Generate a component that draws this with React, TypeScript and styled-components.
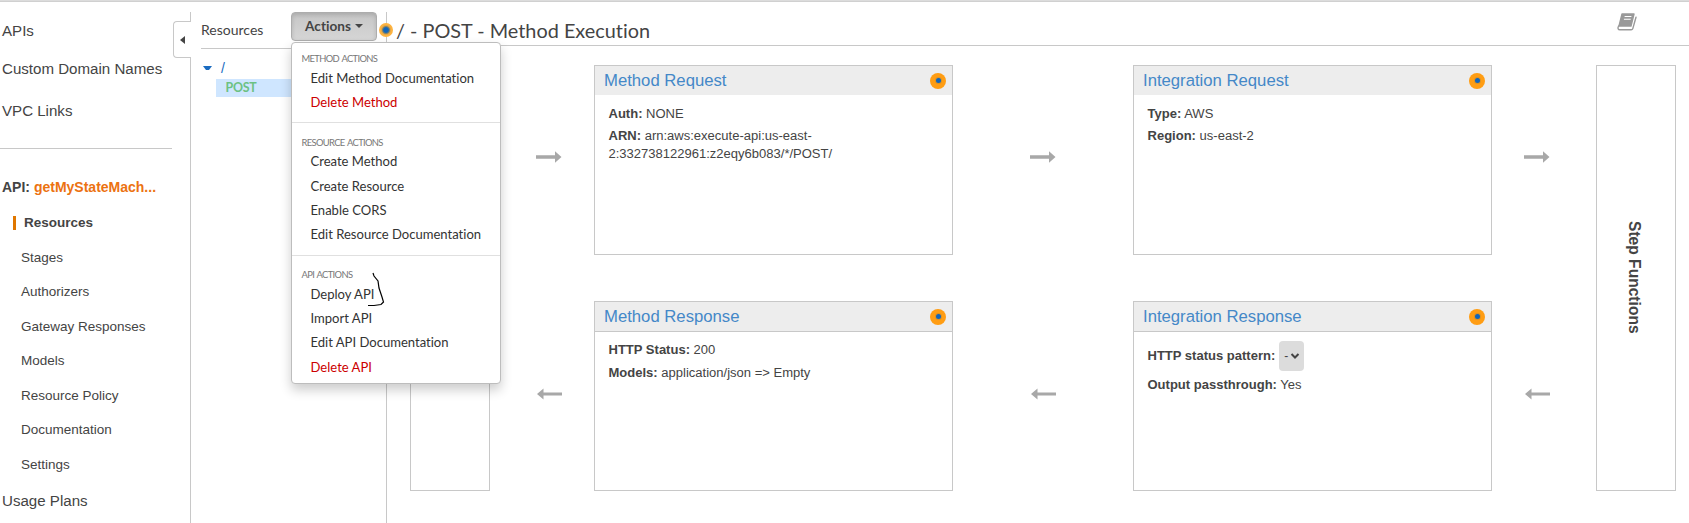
import React from 'react';
import styled, { createGlobalStyle, css } from 'styled-components';

const SANS = '"Liberation Sans", Arial, sans-serif';
const LATO = 'Lato, "Liberation Sans", sans-serif';
const LINE = '#c8c8c8';

const GlobalStyle = createGlobalStyle`
  *, *::before, *::after { box-sizing: border-box; }
  body { margin: 0; background: #fff; color: #444; font-family: ${SANS}; overflow: hidden; }
`;

const Page = styled.div`
  position: relative;
  display: flex;
  flex-direction: column;
  width: 1689px;
  height: 523px;
  overflow: hidden;
`;
const TopStrip = styled.div`
  flex: none;
  height: 2px;
  background: #dcdcdc;
  border-bottom: 1px solid #d0d0d0;
`;
const Columns = styled.div`
  flex: 1;
  display: flex;
  padding-top: 10px;
`;

/* Left navigation */
const Sidebar = styled.nav`
  position: relative;
  width: 191px;
  border-right: 1px solid ${LINE};
  padding-top: 8px;
`;
const CollapseTab = styled.button`
  position: absolute;
  top: 9px;
  right: -1px;
  width: 18px;
  height: 37px;
  padding: 0;
  display: flex;
  align-items: center;
  justify-content: center;
  background: #fff;
  border: 1px solid ${LINE};
  border-right: 0;
  border-radius: 4px 0 0 4px;
`;
const NavLink = styled.div<{ $gap: number }>`
  height: 22px;
  line-height: 22px;
  padding-left: 2px;
  margin-bottom: ${(p) => p.$gap}px;
  font-size: 15.1px;
`;
const NavRule = styled.div`
  width: 172px;
  height: 1px;
  background: ${LINE};
`;
const ApiName = styled.div`
  margin-top: 27px;
  height: 22px;
  padding-left: 2px;
  line-height: 22px;
  font-size: 14px;
  font-weight: 700;
  white-space: pre;
  span { color: #ec7211; }
`;
const SubNav = styled.div`
  margin: 7.3px 0 8.7px;
`;
const SubLink = styled.div<{ $active?: boolean }>`
  display: flex;
  align-items: center;
  height: 34.5px;
  padding-left: 21px;
  font-size: 13.5px;
  ${(p) =>
    p.$active &&
    css`
      padding-left: 13px;
      font-weight: 700;
      &::before {
        content: '';
        width: 3px;
        height: 14px;
        margin-right: 8px;
        background: #e07700;
      }
    `}
`;

/* Resource tree */
const ResourcePane = styled.section`
  width: 196px;
  padding-left: 10px;
  border-right: 1px solid ${LINE};
`;
const PaneHeader = styled.header`
  display: flex;
  height: 37px;
  border-bottom: 1px solid ${LINE};
`;
const PaneTitle = styled.div`
  width: 90px;
  font: 400 14px/35px ${LATO};
`;
const ActionsButton = styled.button`
  display: flex;
  align-items: center;
  justify-content: center;
  gap: 4px;
  width: 86px;
  height: 29px;
  padding: 0 0 2px;
  border: 1px solid #adadad;
  border-radius: 4px;
  background: linear-gradient(#c6c6c6, #d6d6d6);
  box-shadow: inset 0 2px 4px rgba(0, 0, 0, 0.14);
  color: #444;
  font: 700 13.6px/20px ${LATO};
  font-variant-ligatures: none;
  i {
    border: 4px solid transparent;
    border-top-color: #444;
    border-bottom: 0;
    width: 0;
    height: 0;
  }
`;
const TreeRoot = styled.div`
  display: flex;
  align-items: center;
  gap: 9px;
  height: 18px;
  margin-top: 10px;
  padding-left: 2px;
  color: #1a6bc0;
  font-size: 14px;
`;
const TreeMethod = styled.div`
  height: 18px;
  margin: 2px 0 0 15px;
  padding-left: 9.5px;
  background: #cfe6ff;
  color: #6cc183;
  font: 700 12.4px/18.6px ${LATO};
  letter-spacing: -0.25px;
`;

/* Method execution */
const Main = styled.main`
  flex: 1;
  display: flex;
  flex-direction: column;
`;
const MainHeader = styled.header`
  display: flex;
  justify-content: space-between;
  height: 34px;
  padding-left: 9px;
  padding-right: 51px;
  border-bottom: 1px solid ${LINE};
`;
const MainTitle = styled.h1`
  margin: 0;
  font: 400 19.85px/37px ${LATO};
  font-variant-ligatures: none;
`;
const BookIcon = styled.svg`
  width: 22px;
  height: 20px;
`;
const Flow = styled.div`
  display: flex;
  height: 426px;
  margin: 19px 0 0 23px;
`;
const EndBox = styled.div`
  display: flex;
  align-items: center;
  justify-content: center;
  width: 80px;
  border: 1px solid ${LINE};
  span {
    writing-mode: vertical-rl;
    font-size: 15.6px;
    font-weight: 700;
    line-height: 20px;
    padding: 0 5px 2px 0;
  }
`;
const ArrowColumn = styled.div<{ $width: number; $inset: number }>`
  display: flex;
  flex-direction: column;
  justify-content: space-between;
  width: ${(p) => p.$width}px;
  padding: 84px 0 89.5px ${(p) => p.$inset}px;
`;
const ArrowSvg = styled.svg<{ $left?: boolean }>`
  display: block;
  width: 26px;
  height: 16px;
  margin-left: ${(p) => (p.$left ? 1 : 0)}px;
`;
const CardColumn = styled.div`
  display: flex;
  flex-direction: column;
  justify-content: space-between;
  width: 359px;
`;
const Card = styled.article`
  height: 190px;
  border: 1px solid ${LINE};
`;
const CardHeader = styled.header<{ $ruled?: boolean }>`
  display: flex;
  align-items: center;
  justify-content: space-between;
  height: ${(p) => (p.$ruled ? 30 : 29)}px;
  padding: 0 6px 0 9px;
  background: #ededed;
  border-bottom: ${(p) => (p.$ruled ? `1px solid ${LINE}` : '0')};
  color: #4488c8;
  font-size: 16.7px;
`;
const CardBody = styled.div<{ $top?: number }>`
  padding: ${(p) => p.$top ?? 9}px 13px 0 13.5px;
  font-size: 13.03px;
  line-height: 18px;
`;
const Field = styled.div<{ $after?: number }>`
  margin-bottom: ${(p) => p.$after ?? 5}px;
`;
const SelectField = styled(Field)`
  display: flex;
  align-items: center;
  gap: 4px;
  height: 30px;
`;
const PatternSelect = styled.div`
  display: flex;
  align-items: center;
  justify-content: space-between;
  width: 25px;
  height: 30px;
  padding: 0 4px 0 5px;
  border-radius: 4px;
  background: #dcdcdc;
  font-size: 12px;
`;

const Dot = styled.span<{ $size: number; $soft?: boolean }>`
  flex: none;
  display: flex;
  align-items: center;
  justify-content: center;
  width: ${(p) => p.$size}px;
  height: ${(p) => p.$size}px;
  border-radius: 50%;
  background: ${(p) => (p.$soft ? '#fdb340' : '#ff9d13')};
  &::before {
    content: '';
    width: ${(p) => (p.$soft ? 8 : 5)}px;
    height: ${(p) => (p.$soft ? 8 : 5)}px;
    border-radius: 50%;
    background: #1166bb;
    border: ${(p) => (p.$soft ? '1px solid #8c8460' : '0')};
    box-shadow: 0 0 0 1px ${(p) => (p.$soft ? '#e0a64a' : '#dc9225')};
  }
`;
const TitleDot = styled(Dot)`
  position: absolute;
  left: 379px;
  top: 23px;
`;

/* Actions dropdown */
const Menu = styled.div`
  position: absolute;
  left: 291px;
  top: 42px;
  width: 210px;
  height: 342px;
  padding: 9px 0 0;
  background: #fff;
  border: 1px solid #bdbdbd;
  border-radius: 4px;
  box-shadow: 0 6px 12px rgba(0, 0, 0, 0.2);
`;
const MenuGroup = styled.div`
  & + & {
    margin-top: 7.9px;
    border-top: 1px solid #e0e0e0;
    padding-top: 12.6px;
  }
`;
const MenuHeading = styled.div`
  height: 13.7px;
  padding-left: 9.5px;
  color: #777;
  font: 400 9.4px/14.5px ${LATO};
  letter-spacing: -0.65px;
  word-spacing: 1px;
`;
const MenuItem = styled.div<{ $danger?: boolean }>`
  height: 24.3px;
  padding-left: 18.5px;
  color: ${(p) => (p.$danger ? '#cc0000' : '#333')};
  font: 400 13.06px/24.3px ${LATO};
  font-variant-ligatures: none;
`;
const PenMark = styled.svg`
  position: absolute;
  left: 366px;
  top: 272px;
  width: 20px;
  height: 36px;
`;

function Arrow({ left }: { left?: boolean }) {
  return (
    <ArrowSvg $left={left} viewBox="0 0 26 16" fill="#a8a8a8">
      {left ? (
        <path d="M0 8 6.5 2.5V6.5H25V9.5H6.5V13.5Z" />
      ) : (
        <path d="M0 6.2H19V2.2L25.5 8 19 13.8V9.8H0Z" />
      )}
    </ArrowSvg>
  );
}

const Arrows = ({ width, inset }: { width: number; inset: number }) => (
  <ArrowColumn $width={width} $inset={inset}>
    <Arrow />
    <Arrow left />
  </ArrowColumn>
);

const menu = [
  { heading: 'METHOD ACTIONS', items: ['Edit Method Documentation', 'Delete Method'] },
  {
    heading: 'RESOURCE ACTIONS',
    items: ['Create Method', 'Create Resource', 'Enable CORS', 'Edit Resource Documentation'],
  },
  { heading: 'API ACTIONS', items: ['Deploy API', 'Import API', 'Edit API Documentation', 'Delete API'] },
];

const subLinks = [
  'Resources',
  'Stages',
  'Authorizers',
  'Gateway Responses',
  'Models',
  'Resource Policy',
  'Documentation',
  'Settings',
];

export default function App() {
  return (
    <Page>
      <GlobalStyle />
      <TopStrip />
      <Columns>
        <Sidebar>
          <NavLink $gap={16}>APIs</NavLink>
          <NavLink $gap={20}>Custom Domain Names</NavLink>
          <NavLink $gap={26}>VPC Links</NavLink>
          <NavRule />
          <ApiName>
            API: <span>getMyStateMach...</span>
          </ApiName>
          <SubNav>
            {subLinks.map((label, i) => (
              <SubLink key={label} $active={i === 0}>
                {label}
              </SubLink>
            ))}
          </SubNav>
          <NavLink $gap={0}>Usage Plans</NavLink>
          <CollapseTab aria-label="Collapse">
            <svg width="5" height="8" viewBox="0 0 5 8">
              <path d="M5 0V8L0 4Z" fill="#444" />
            </svg>
          </CollapseTab>
        </Sidebar>

        <ResourcePane>
          <PaneHeader>
            <PaneTitle>Resources</PaneTitle>
            <ActionsButton>
              Actions
              <i />
            </ActionsButton>
          </PaneHeader>
          <TreeRoot>
            <svg width="9" height="4" viewBox="0 0 9 4">
              <path d="M0 0H9L6 4H3Z" fill="#1a6bc0" />
            </svg>
            /
          </TreeRoot>
          <TreeMethod>POST</TreeMethod>
        </ResourcePane>

        <Main>
          <MainHeader>
            <MainTitle>/ - POST - Method Execution</MainTitle>
            <BookIcon viewBox="0 0 22 20">
              <path d="M6 2H18L15 14H3Z" fill="#999" stroke="#999" strokeWidth="1.4" strokeLinejoin="round" />
              <path d="M2.6 14C1.4 16 2 17.8 4 17.8H15.2Q16.4 17.8 16.8 16.6L20 5.2" fill="none" stroke="#999" strokeWidth="1.4" strokeLinecap="round" />
              <path d="M8.6 4.5H15.4M7.9 7.3H14.7" stroke="#fff" strokeWidth="1.1" />
            </BookIcon>
          </MainHeader>
          <Flow>
            <EndBox />
            <Arrows width={104} inset={46} />
            <CardColumn>
              <Card>
                <CardHeader>
                  Method Request
                  <Dot $size={16} />
                </CardHeader>
                <CardBody $top={10}>
                  <Field $after={4}>
                    <b>Auth:</b> NONE
                  </Field>
                  <Field>
                    <b>ARN:</b> arn:aws:execute-api:us-east-
                    <br />
                    2:332738122961:z2eqy6b083/*/POST/
                  </Field>
                </CardBody>
              </Card>
              <Card>
                <CardHeader $ruled>
                  Method Response
                  <Dot $size={16} />
                </CardHeader>
                <CardBody>
                  <Field>
                    <b>HTTP Status:</b> 200
                  </Field>
                  <Field>
                    <b>Models:</b> application/json =&gt; Empty
                  </Field>
                </CardBody>
              </Card>
            </CardColumn>
            <Arrows width={180} inset={77} />
            <CardColumn>
              <Card>
                <CardHeader>
                  Integration Request
                  <Dot $size={16} />
                </CardHeader>
                <CardBody $top={10}>
                  <Field $after={4}>
                    <b>Type:</b> AWS
                  </Field>
                  <Field>
                    <b>Region:</b> us-east-2
                  </Field>
                </CardBody>
              </Card>
              <Card>
                <CardHeader $ruled>
                  Integration Response
                  <Dot $size={16} />
                </CardHeader>
                <CardBody>
                  <SelectField>
                    <b>HTTP status pattern:</b>
                    <PatternSelect>
                      -
                      <svg width="10" height="8" viewBox="0 0 10 8">
                        <path d="M1.5 2 5 5.5 8.5 2" fill="none" stroke="#444" strokeWidth="2" />
                      </svg>
                    </PatternSelect>
                  </SelectField>
                  <Field>
                    <b>Output passthrough:</b> Yes
                  </Field>
                </CardBody>
              </Card>
            </CardColumn>
            <Arrows width={104} inset={32} />
            <EndBox>
              <span>Step Functions</span>
            </EndBox>
          </Flow>
        </Main>
      </Columns>

      <TitleDot $size={14} $soft />
      <Menu>
        {menu.map((group) => (
          <MenuGroup key={group.heading}>
            <MenuHeading>{group.heading}</MenuHeading>
            {group.items.map((item) => (
              <MenuItem key={item} $danger={item.startsWith('Delete')}>
                {item}
              </MenuItem>
            ))}
          </MenuGroup>
        ))}
      </Menu>
      <PenMark viewBox="0 0 20 36">
        <path d="M7 1 8 4 12 9 13 16 16 25 17.5 30 15 32.5 8 33.5H2" fill="none" stroke="#000" strokeWidth="1.2" />
      </PenMark>
    </Page>
  );
}
